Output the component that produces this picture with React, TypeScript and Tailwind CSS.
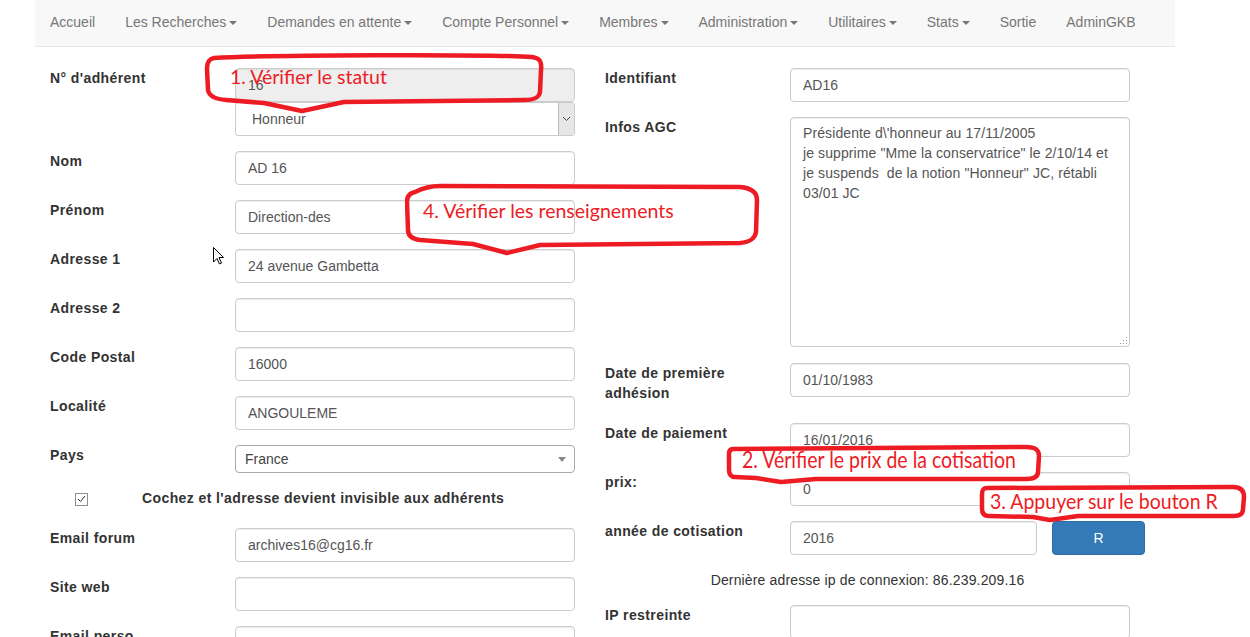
import React from "react";

const Caret = () => (
  <span className="inline-block ml-[3px] w-0 h-0 border-t-[4px] border-t-[#777] border-x-[4px] border-x-transparent translate-y-[1px]" />
);

const navItems: { t: string; c?: boolean }[] = [
  { t: "Accueil" },
  { t: "Les Recherches", c: true },
  { t: "Demandes en attente", c: true },
  { t: "Compte Personnel", c: true },
  { t: "Membres", c: true },
  { t: "Administration", c: true },
  { t: "Utilitaires", c: true },
  { t: "Stats", c: true },
  { t: "Sortie" },
  { t: "AdminGKB" },
];

function Label({ children }: { children: React.ReactNode }) {
  return (
    <div className="w-[185px] shrink-0 font-bold text-[14px] leading-[20px] tracking-[0.4px] text-[#333]">
      {children}
    </div>
  );
}

function Input({ value, w, disabled }: { value?: string; w?: string; disabled?: boolean }) {
  return (
    <div
      className={
        (w ?? "w-[340px]") +
        " h-[34px] border border-[#ccc] rounded-[4px] px-[12px] flex items-center text-[14px] text-[#555] shadow-[inset_0_1px_1px_rgba(0,0,0,0.075)] " +
        (disabled ? "bg-[#eee]" : "bg-white")
      }
    >
      {value}
    </div>
  );
}

function Row({ label, children, mb }: { label: React.ReactNode; children: React.ReactNode; mb?: string }) {
  return (
    <div className={"flex items-start " + (mb ?? "mb-[15px]")}>
      <Label>{label}</Label>
      <div>{children}</div>
    </div>
  );
}

export default function App() {
  return (
    <div className="relative w-[1250px] h-[637px] overflow-hidden bg-white font-['Liberation_Sans',Arial,sans-serif]">
      {/* Navbar */}
      <div className="ml-[35px] w-[1140px] h-[47px] bg-[#f8f8f8] border-b border-[#e7e7e7] flex">
        {navItems.map((n) => (
          <div key={n.t} className="px-[15px] h-[46px] flex items-center pb-[2px] text-[14px] text-[#777] whitespace-nowrap">
            {n.t}
            {n.c && <Caret />}
          </div>
        ))}
      </div>

      {/* Form */}
      <div className="flex pt-[21px]">
        {/* Left column */}
        <div className="ml-[35px] w-[555px] pl-[15px]">
          <Row label="N° d'adhérent">
            <Input value="16" disabled />
            <div className="w-[340px] h-[34px] border border-[#ccc] rounded-[3px] bg-white flex items-center text-[14px] text-[#555]">
              <span className="pl-[16px] flex-1">Honneur</span>
              <div className="w-[16px] h-[32px] bg-[#e6e6e6] border-l border-[#bbb] flex items-center justify-center">
                <svg width="9" height="6" viewBox="0 0 9 6">
                  <path d="M1 1 L4.5 4.5 L8 1" fill="none" stroke="#444" strokeWidth="1" />
                </svg>
              </div>
            </div>
          </Row>
          <Row label="Nom">
            <Input value="AD 16" />
          </Row>
          <Row label="Prénom">
            <Input value="Direction-des" />
          </Row>
          <Row label="Adresse 1">
            <Input value="24 avenue Gambetta" />
          </Row>
          <Row label="Adresse 2">
            <Input />
          </Row>
          <Row label="Code Postal">
            <Input value="16000" />
          </Row>
          <Row label="Localité">
            <Input value="ANGOULEME" />
          </Row>
          <Row label="Pays" mb="mb-[16px]">
            <div className="w-[340px] h-[28px] border border-[#aaa] rounded-[4px] bg-white flex items-center text-[14px] text-[#444] pl-[9px] pr-[8px]">
              <span className="flex-1">France</span>
              <span className="w-0 h-0 border-t-[5px] border-t-[#888] border-x-[4px] border-x-transparent" />
            </div>
          </Row>
          <div className="flex items-center h-[20px] mb-[19px]">
            <div className="ml-[25px] w-[13px] h-[13px] border border-[#8f8f8f] bg-white flex items-center justify-center">
              <svg width="9" height="8" viewBox="0 0 9 8">
                <path d="M1 4 L3.5 6.5 L8 1" fill="none" stroke="#333" strokeWidth="1" />
              </svg>
            </div>
            <div className="ml-[54px] font-bold text-[14px] tracking-[0.4px] text-[#333] -translate-y-[1px]">
              Cochez et l'adresse devient invisible aux adhérents
            </div>
          </div>
          <Row label="Email forum">
            <Input value="archives16@cg16.fr" />
          </Row>
          <Row label="Site web">
            <Input />
          </Row>
          <Row label="Email perso">
            <Input />
          </Row>
        </div>

        {/* Right column */}
        <div className="w-[555px] pl-[15px]">
          <Row label="Identifiant">
            <Input value="AD16" />
          </Row>
          <Row label="Infos AGC" mb="mb-[16px]">
            <div className="relative w-[340px] h-[230px] border border-[#ccc] rounded-[4px] px-[12px] pt-[5px] text-[14px] leading-[20px] tracking-[0.1px] text-[#555] shadow-[inset_0_1px_1px_rgba(0,0,0,0.075)] whitespace-pre-wrap">
              {"Présidente d\\'honneur au 17/11/2005\nje supprime \"Mme la conservatrice\" le 2/10/14 et je suspends  de la notion \"Honneur\" JC, rétabli 03/01 JC"}
              <svg className="absolute right-[1px] bottom-[1px]" width="9" height="9" viewBox="0 0 9 9">
                <rect x="7" y="1" width="1" height="1" fill="#999" />
                <rect x="4" y="4" width="1" height="1" fill="#999" />
                <rect x="7" y="4" width="1" height="1" fill="#999" />
                <rect x="1" y="7" width="1" height="1" fill="#999" />
                <rect x="4" y="7" width="1" height="1" fill="#999" />
                <rect x="7" y="7" width="1" height="1" fill="#999" />
              </svg>
            </div>
          </Row>
          <Row label={<>Date de première<br />adhésion</>} mb="mb-[20px]">
            <Input value="01/10/1983" />
          </Row>
          <Row label="Date de paiement">
            <Input value="16/01/2016" />
          </Row>
          <Row label="prix:">
            <Input value="0" />
          </Row>
          <Row label="année de cotisation">
            <div className="flex gap-[15px]">
              <Input value="2016" w="w-[247px]" />
              <div className="w-[93px] h-[34px] rounded-[4px] bg-[#337ab7] border border-[#2e6da4] flex items-center justify-center text-white text-[14px]">
                R
              </div>
            </div>
          </Row>
          <div className="pr-[15px] text-center text-[14px] leading-[20px] tracking-[0.15px] text-[#333] mt-[15px] mb-[15px]">
            Dernière adresse ip de connexion: 86.239.209.16
          </div>
          <Row label="IP restreinte">
            <Input />
          </Row>
        </div>
      </div>

      {/* Annotations (overlay) */}
      <svg className="absolute left-[204px] top-[52px]" width="341" height="64" viewBox="0 0 341 64">
        <path
          d="M 10 6 C 60 3, 280 2, 328 5 C 336 6, 338 10, 337 18 L 336 40 C 335 46, 330 48, 320 48 L 140 50 L 98 59 L 60 51 L 22 48 C 10 47, 5 44, 4 38 L 3 17 C 3 10, 5 7, 10 6 Z"
          fill="none"
          stroke="#ed1c24"
          strokeWidth="4.5"
          strokeLinejoin="round"
        />
      </svg>
      <svg className="absolute left-[405px] top-[182px]" width="356" height="74" viewBox="0 0 356 74">
        <path
          d="M 10 10 C 18 6, 25 4, 35 4 L 335 5 C 346 6, 352 10, 352 18 L 351 50 C 350 57, 345 60, 335 61 L 135 63 L 102 71 L 68 62 L 15 58 C 7 57, 3 54, 3 48 L 2 20 C 2 14, 5 11, 10 10 Z"
          fill="none"
          stroke="#ed1c24"
          strokeWidth="4.5"
          strokeLinejoin="round"
        />
      </svg>
      <svg className="absolute left-[726px] top-[444px]" width="318" height="42" viewBox="0 0 318 42">
        <path
          d="M 7 5 L 300 3 C 310 3, 313 6, 313 12 L 312 28 C 312 33, 308 35, 300 35 L 90 35 L 55 38 L 30 34 L 9 33 C 5 33, 3 30, 3 26 L 3 10 C 3 7, 4 5, 7 5 Z"
          fill="#ffffff"
          stroke="#ed1c24"
          strokeWidth="4.5"
          strokeLinejoin="round"
        />
      </svg>
      <svg className="absolute left-[978px] top-[483px]" width="272" height="40" viewBox="0 0 272 40">
        <path
          d="M 9 5 L 255 4 C 263 4, 266 8, 266 14 L 265 26 C 265 31, 262 33, 255 33 L 100 33 L 72 37 L 55 34 L 11 33 C 6 33, 4 30, 4 26 L 4 12 C 4 7, 5 5, 9 5 Z"
          fill="#ffffff"
          stroke="#ed1c24"
          strokeWidth="4.5"
          strokeLinejoin="round"
        />
      </svg>
      <div className="absolute left-[230px] top-[64px] h-[26px] flex items-center text-[19.5px] text-[#ed1c24] font-['Lato',sans-serif] whitespace-nowrap">
        1. Vérifier le statut
      </div>
      <div className="absolute left-[423px] top-[198px] h-[26px] flex items-center text-[19.5px] text-[#ed1c24] font-['Lato',sans-serif] whitespace-nowrap">
        4. Vérifier les renseignements
      </div>
      <div className="absolute left-[742px] top-[447px] h-[26px] flex items-center text-[19.5px] text-[#ed1c24] font-['Lato',sans-serif] whitespace-nowrap scale-y-[1.15]">
        2. Vérifier le prix de la cotisation
      </div>
      <div className="absolute left-[990px] top-[488px] h-[26px] flex items-center text-[19.5px] text-[#ed1c24] font-['Lato',sans-serif] whitespace-nowrap scale-y-[1.1]">
        3. Appuyer sur le bouton R
      </div>

      {/* Mouse cursor */}
      <svg className="absolute left-[212px] top-[246px]" width="13" height="20" viewBox="0 0 13 20">
        <path d="M1.5 1.5 L1.5 16 L5 12.5 L7.5 18 L9.5 17 L7 11.5 L11.5 11.5 Z" fill="#fff" stroke="#000" strokeWidth="1" strokeLinejoin="miter" />
      </svg>
    </div>
  );
}
